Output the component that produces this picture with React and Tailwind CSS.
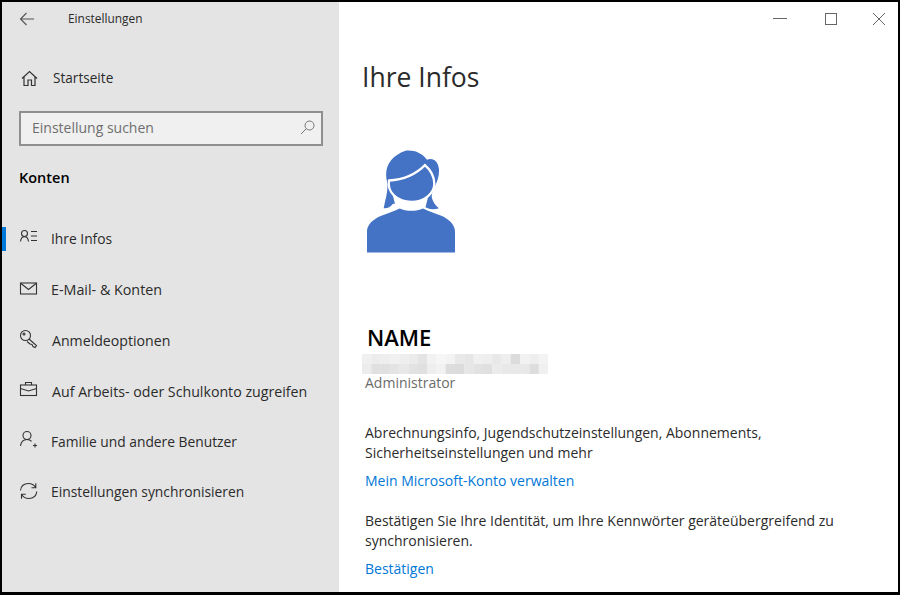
const Stroke = ({ children, w = 20, h = 20, vb = "0 0 20 20", sw = 1.1, className = "" }) => (
  <svg width={w} height={h} viewBox={vb} fill="none" stroke="#333" strokeWidth={sw} className={className}>{children}</svg>
);

const items = [
  { label: "Ihre Infos", size: "text-[13.800px]", gap: "ml-[12px]", active: true, icon: <Stroke><circle cx="5.5" cy="5.500" r="3" /><path d="M1.500 13.500c.3-3 1.800-4.800 4-4.800s3.700 1.800 4 4.800M12 3.500h6M12 8h6M12 12.500h6" /></Stroke> },
  { label: "E-Mail- & Konten", size: "text-[14.300px]", gap: "ml-[12px]", icon: <Stroke><rect x="1.500" y="4" width="16" height="11" /><path d="M2 4.500l7.500 6 7.500-6" /></Stroke> },
  { label: "Anmeldeoptionen", size: "text-[14.150px]", gap: "ml-[13px]", icon: <Stroke><circle cx="6.500" cy="6.500" r="5" /><circle cx="5" cy="5" r="1" /><path d="M10 10l7.500 6.500-1.500 2-2-1-1-2-2-.5-3-2.500" /></Stroke> },
  { label: "Auf Arbeits- oder Schulkonto zugreifen", size: "text-[14.200px]", gap: "ml-[13px]", icon: <Stroke><rect x="1.500" y="5" width="16" height="10.500" /><path d="M6.500 5V2.500h6V5M1.500 8.500l8 2.500 8-2.500" /></Stroke> },
  { label: "Familie und andere Benutzer", size: "text-[13.800px]", gap: "ml-[12px]", icon: <Stroke><circle cx="8" cy="5.500" r="4" /><path d="M1.500 16c.5-4 3-6.500 6.500-6.500 2 0 3.500.6 4.600 1.800M14 15.500h4M16 13.500v4" /></Stroke> },
  { label: "Einstellungen synchronisieren", size: "text-[13.850px]", gap: "ml-[12px]", icon: <Stroke><path d="M1.500 9.500C2 5 5.200 2.500 9.500 2.500c3 0 5.500 1.300 7 3.800M16.800 2.300v4.400h-4.300M17.800 10.500c-.5 4.500-3.800 7-8 7-3 0-5.500-1.300-7-3.800M2.500 17.700v-4.400h4.300" /></Stroke> },
];

const mosaic = [
  ["#f0f0f0","#ececec","#eeeeee","#f1f1f1","#eeeeee","#ebebeb","#e4e4e4","#f2f2f2","#f6f6f6","#f3f3f3","#e9e9e9","#e6e6e6","#f0f0f0","#eeeeee","#e8e8e8","#eeeeee","#dcdcdc","#f2f2f2","#eeeeee","#f3f3f3"],
  ["#ececec","#e0e0e0","#e0e0e0","#e4e4e4","#e8e8e8","#e2e2e2","#e0e0e0","#eeeeee","#f2f2f2","#dddddd","#dcdcdc","#e6e6e6","#e2e2e2","#e0e0e0","#ebebeb","#e8e8e8","#e9e9e9","#e8e8e8","#dddddd","#f0f0f0"],
];

export default function App() {
  return (
    <div className="w-[900px] h-[595px] bg-black pt-[2px] pb-[3px] pl-[2px] pr-[2px] overflow-hidden text-[14px] text-[#2b2b2b] font-['Open_Sans','Noto_Sans',sans-serif]">
      <div className="h-full flex bg-white">
        <aside className="w-[337px] shrink-0 bg-[#e4e4e4] flex flex-col">
          <div className="h-[34px] flex items-center pl-[17px]">
            <svg width="16" height="14" viewBox="0 0 16 14" fill="none" stroke="#555" strokeWidth="1.100"><path d="M15 7H1.500M7.500 1L1.500 7l6 6" /></svg>
            <span className="ml-[33px] text-[11.900px]">Einstellungen</span>
          </div>
          <div className="mt-[25px] h-[34px] flex items-center pl-[19px] gap-[15px]">
            <Stroke w={17} h={17} vb="0 0 17 17" sw={1.200}><path d="M1 8.500L8.500 1.500 16 8.500M3 7v8.500h4V10h3.500v5.500H14V7" /></Stroke>
            <span className="text-[13.600px]">Startseite</span>
          </div>
          <div className="mt-[16px] mx-[17px] w-[304px] h-[35px] border-[2.500px] border-[#8f8f8f] bg-[#f0f0f0] flex items-center justify-between pl-[11px] pr-[6px] pb-[2px]">
            <span className="text-[#6f6f6f]">Einstellung suchen</span>
            <svg width="15" height="15" viewBox="0 0 15 15" fill="none" stroke="#777" strokeWidth="1"><circle cx="9.500" cy="5.500" r="4.500" /><path d="M6.200 8.800L1 14" /></svg>
          </div>
          <div className="mt-[21px] ml-[17px] text-[14.500px] font-semibold text-black">Konten</div>
          <nav className="mt-[25.500px] flex flex-col">
            {items.map((it) => (
              <div key={it.label} className={"relative h-[50.600px] flex items-center pl-[17px] " + it.size}>
                {it.active && <span className="absolute left-0 top-[13px] w-[4px] h-[24px] bg-[#0078d7]" />}
                <span className="w-[20px] h-[20px] shrink-0 -mt-[3px]">{it.icon}</span>
                <span className={it.gap}>{it.label}</span>
              </div>
            ))}
          </nav>
        </aside>
        <main className="flex-1 relative pl-[23px]">
          <div className="absolute right-0 top-0 flex items-center h-[33px] pr-[13px] gap-[36px]">
            <span className="w-[14px] h-px bg-[#666] mr-[2px]" />
            <span className="w-[12px] h-[12px] border border-[#666]" />
            <svg width="12" height="12" viewBox="0 0 12 12" stroke="#666" strokeWidth="1"><path d="M0 0l12 12M12 0L0 12" /></svg>
          </div>
          <h1 className="mt-[56px] text-[26.500px] leading-[38px] text-[#2b2b2b]">Ihre Infos</h1>
          <svg className="mt-[54px] ml-[5px]" width="88" height="103" viewBox="52 32 264 306">
            <path fill="#4472c4" d="M102 205C108 175 117 150 112 125C102 85 120 48 170 32C195 30 218 40 232 60C250 52 266 65 268 88C270 125 248 145 246 170C248 185 258 198 268 205C250 212 232 208 215 195L130 192C122 203 112 206 102 205Z" />
            <path fill="#fff" d="M128 160H238L226 208H140Z" />
            <path fill="#4472c4" d="M52 338V275C52 255 70 238 95 228C115 220 132 214 150 206C160 210 172 213 185 213C198 213 210 210 220 206C238 214 255 220 275 228C298 238 316 255 316 275V338Z" />
            <path fill="#4472c4" stroke="#fff" strokeWidth="7" d="M118 122C160 120 200 102 226 76C244 92 254 112 254 132C254 160 225 186 185 186C145 186 112 160 118 122Z" />
          </svg>
          <div className="mt-[69px] ml-[5px] text-[22px] leading-[30px] font-semibold text-black">NAME</div>
          <svg className="mt-[2px]" width="186" height="20" viewBox="0 0 20 2" preserveAspectRatio="none">
            {mosaic.flatMap((row, y) => row.map((c, x) => <rect key={x + "-" + y} x={x} y={y} width="1.020" height="1.020" fill={c} />))}
          </svg>
          <div className="ml-[3px] -mt-px leading-[20px] text-[#6b6b6b]">Administrator</div>
          <p className="ml-[3px] mt-[30px] leading-[20px] w-[480px]">Abrechnungsinfo, Jugendschutzeinstellungen, Abonnements, Sicherheitseinstellungen und mehr</p>
          <div className="ml-[3px] mt-[8px] leading-[20px] text-[#0078d7]">Mein Microsoft-Konto verwalten</div>
          <p className="ml-[3px] mt-[20px] leading-[20px] w-[490px]">Bestätigen Sie Ihre Identität, um Ihre Kennwörter geräteübergreifend zu synchronisieren.</p>
          <div className="ml-[3px] mt-[8px] leading-[20px] text-[#0078d7]">Bestätigen</div>
        </main>
      </div>
    </div>
  );
}
